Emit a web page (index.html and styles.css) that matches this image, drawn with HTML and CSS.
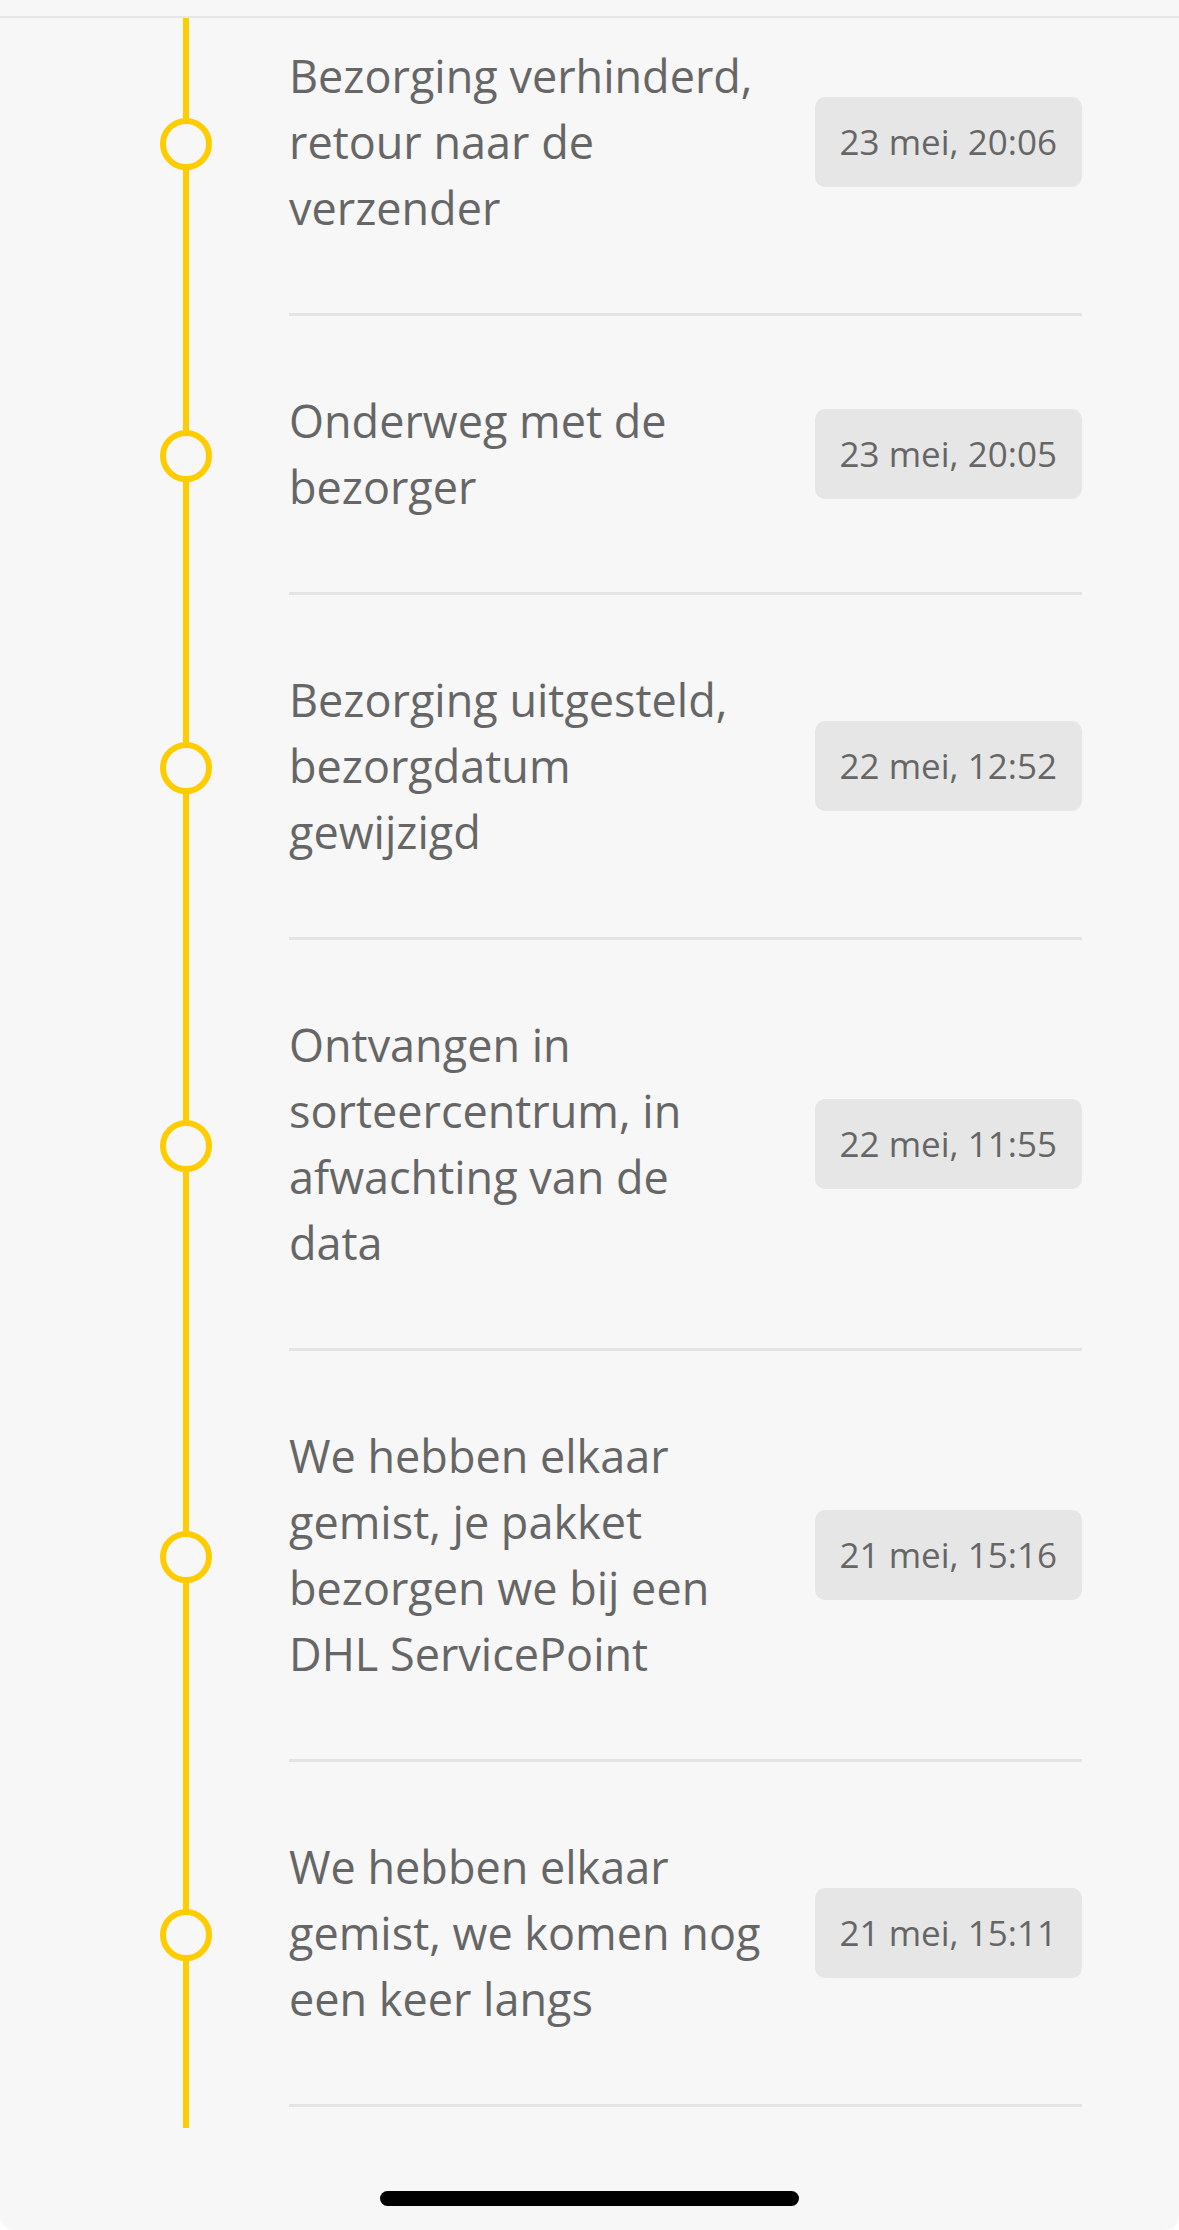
FILE: index.html
```html
<!DOCTYPE html>
<html>

<head>
    <title>Zendingstatus</title>
    <meta charset="UTF-8">
    <link rel="stylesheet" href="styles.css">
</head>

<body>
    <div class="screen">
        <div class="topbar"></div>
        <div class="scroller">
            <ol class="timeline">
                <li class="event">
                    <div class="marker"><span class="dot"></span></div>
                    <div class="event-body">
                        <p class="event-text">Bezorging verhinderd,<br>retour naar de<br>verzender</p>
                        <span class="event-time">23 mei, 20:06</span>
                    </div>
                </li>
                <li class="event">
                    <div class="marker"><span class="dot"></span></div>
                    <div class="event-body">
                        <p class="event-text">Onderweg met de<br>bezorger</p>
                        <span class="event-time">23 mei, 20:05</span>
                    </div>
                </li>
                <li class="event">
                    <div class="marker"><span class="dot"></span></div>
                    <div class="event-body">
                        <p class="event-text">Bezorging uitgesteld,<br>bezorgdatum<br>gewijzigd</p>
                        <span class="event-time">22 mei, 12:52</span>
                    </div>
                </li>
                <li class="event">
                    <div class="marker"><span class="dot"></span></div>
                    <div class="event-body">
                        <p class="event-text">Ontvangen in<br>sorteercentrum, in<br>afwachting van de<br>data</p>
                        <span class="event-time">22 mei, 11:55</span>
                    </div>
                </li>
                <li class="event">
                    <div class="marker"><span class="dot"></span></div>
                    <div class="event-body">
                        <p class="event-text">We hebben elkaar<br>gemist, je pakket<br>bezorgen we bij een<br>DHL ServicePoint</p>
                        <span class="event-time">21 mei, 15:16</span>
                    </div>
                </li>
                <li class="event">
                    <div class="marker"><span class="dot"></span></div>
                    <div class="event-body">
                        <p class="event-text">We hebben elkaar<br>gemist, we komen nog<br>een keer langs</p>
                        <span class="event-time">21 mei, 15:11</span>
                    </div>
                </li>
            </ol>
            <div class="timeline-tail"></div>
        </div>
        <div class="home-bar"></div>
    </div>
</body>

</html>
```

FILE: styles.css
```css
body {
    margin: 0;
    background-color: #fff;
    font-family: "Open Sans", "Noto Sans", sans-serif;
}

.screen {
    height: 2230px;
    display: flex;
    flex-direction: column;
    background-color: #f7f7f7;
    border-radius: 0 0 14px 14px;
    overflow: hidden;
}

.topbar {
    height: 16px;
    border-bottom: 2px solid #e6e6e6;
}

.scroller {
    flex: 1;
    overflow: hidden;
}

.timeline {
    list-style: none;
    margin: -47px 0 0 0;
    padding: 0;
}

.event {
    display: grid;
    grid-template-columns: 289px 1fr;
}

/* yellow line runs through every marker cell */
.marker {
    display: flex;
    align-items: center;
    background: linear-gradient(#ffcc00, #ffcc00) no-repeat 183px 0 / 6px 100%;
}

.dot {
    width: 40px;
    height: 40px;
    margin-left: 160px;
    border: 6px solid #ffcc00;
    border-radius: 50%;
    background-color: #f7f7f7;
}

.event-body {
    display: flex;
    align-items: center;
    justify-content: space-between;
    margin-right: 97px;
    padding: 72px 0;
    border-bottom: 3px solid #e4e4e4;
}

.event-text {
    margin: 0;
    font-size: 45px;
    line-height: 66px;
    color: #666;
}

.event-time {
    padding: 26px 25px;
    border-radius: 10px;
    background-color: #e6e6e6;
    color: #666;
    font-size: 35px;
    line-height: 38px;
    white-space: nowrap;
}

.timeline-tail {
    height: 21px;
    background: linear-gradient(#ffcc00, #ffcc00) no-repeat 183px 0 / 6px 100%;
}

.home-bar {
    width: 419px;
    height: 15px;
    margin: 0 auto 24px;
    border-radius: 8px;
    background-color: #000;
}
```
